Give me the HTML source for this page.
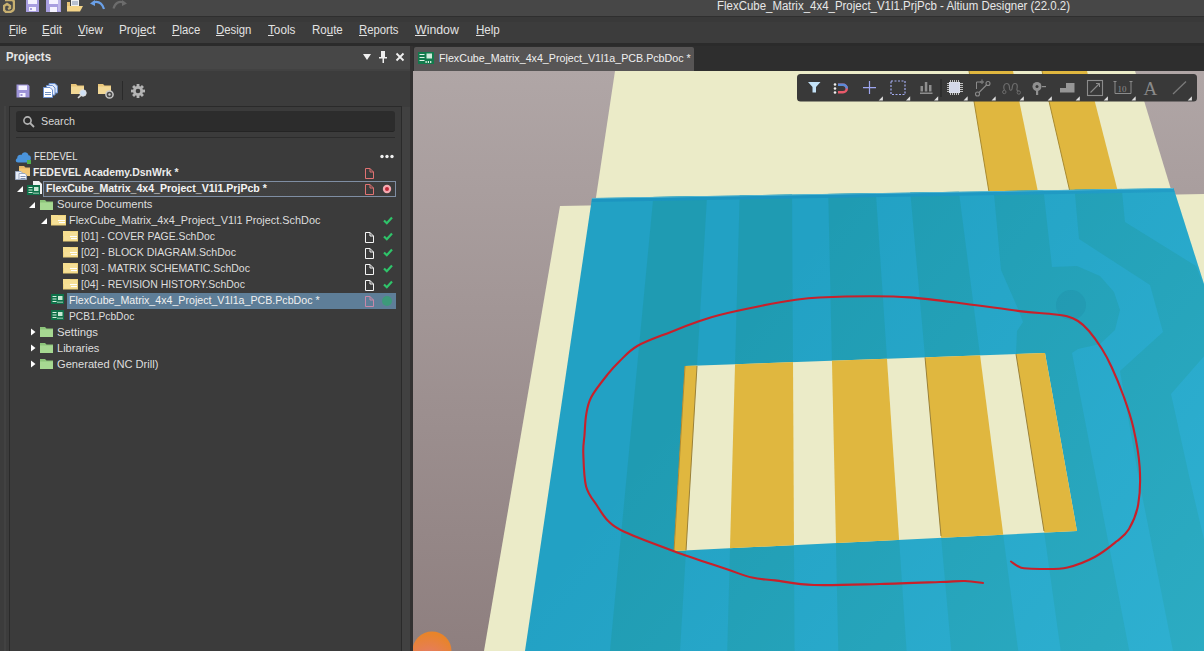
<!DOCTYPE html><html><head><meta charset="utf-8"><style>
html,body{margin:0;padding:0;}
body{width:1204px;height:651px;overflow:hidden;position:relative;background:#2e2e2e;font-family:"Liberation Sans",sans-serif;}
.a{position:absolute;}
.t{position:absolute;white-space:pre;line-height:1;}
u{text-decoration:none;}
</style></head><body>
<div class="a" style="left:0;top:0;width:1204px;height:16px;background:#474747"></div>
<div class="a" style="left:0;top:16px;width:1204px;height:1px;background:#2f2f2f"></div>
<div class="a" style="left:0;top:17px;width:1204px;height:26px;background:#3c3c3c"></div>
<div class="a" style="left:0;top:17px;width:1204px;height:5px;background:#393939"></div>
<div class="a" style="left:0;top:43px;width:1204px;height:3px;background:#2b2b2b"></div>
<svg class="a" style="left:3px;top:0px" width="12" height="13"><path d="M2,0 H9 Q11,0 11,3 V7 Q11,12 6,12 H3 L1,10 V6 L4,4 L7,6 V8 L5,9" fill="none" stroke="#c8b070" stroke-width="2.4"/></svg>
<svg class="a" style="left:26px;top:0px" width="13" height="12"><path d="M0,0 H13 V12 H0 Z" fill="#a89ee0"/><rect x="2" y="0" width="9" height="4" fill="#f4f2ff"/><rect x="3" y="7" width="7" height="4" fill="#f4f2ff"/><rect x="4" y="8" width="2" height="2" fill="#a89ee0"/></svg>
<svg class="a" style="left:46px;top:0px" width="15" height="12"><path d="M0,0 H15 V12 H0 Z" fill="#a89ee0"/><rect x="3" y="0" width="9" height="4" fill="#f4f2ff"/><rect x="4" y="7" width="7" height="5" fill="#f4f2ff"/><rect x="12.5" y="0" width="1" height="11" fill="#d8d4f4"/></svg>
<svg class="a" style="left:67px;top:0px" width="17" height="12"><rect x="4" y="0" width="8" height="6" fill="#f0f0f0"/><rect x="5" y="1.5" width="6" height="1" fill="#8090b0"/><rect x="5" y="3.5" width="6" height="1" fill="#8090b0"/><path d="M0,2 H3 V11 H0 Z" fill="#e8c478"/><path d="M0,6 H16 L13,11.5 H0 Z" fill="#f4d488"/></svg>
<svg class="a" style="left:90px;top:0px" width="16" height="10"><path d="M3,2.5 Q11,0 14,9" fill="none" stroke="#6aa0e8" stroke-width="2.2"/><polygon points="0,3.5 5,0 5,6" fill="#6aa0e8"/></svg>
<svg class="a" style="left:112px;top:0px" width="15" height="9"><path d="M12,2.5 Q4,0 1.5,8.5" fill="none" stroke="#6c6c6c" stroke-width="2.2"/><polygon points="15,3.5 10,0 10,6" fill="#6c6c6c"/></svg>
<div class="t" style="left:716.6px;top:0.2px;font-size:12px;font-weight:400;color:#e8e8e8;transform:scaleX(0.9554);transform-origin:0 0;">FlexCube_Matrix_4x4_Project_V1l1.PrjPcb - Altium Designer (22.0.2)</div>
<div class="t" style="left:8.5px;top:23.9px;font-size:12px;font-weight:400;color:#e2e2e2;transform:scaleX(0.9254);transform-origin:0 0;"><span style="text-decoration:underline;text-underline-offset:1px;text-decoration-thickness:1px">F</span>ile</div>
<div class="t" style="left:42.4px;top:23.9px;font-size:12px;font-weight:400;color:#e2e2e2;transform:scaleX(0.9627);transform-origin:0 0;"><span style="text-decoration:underline;text-underline-offset:1px;text-decoration-thickness:1px">E</span>dit</div>
<div class="t" style="left:77.8px;top:23.9px;font-size:12px;font-weight:400;color:#e2e2e2;transform:scaleX(0.9652);transform-origin:0 0;"><span style="text-decoration:underline;text-underline-offset:1px;text-decoration-thickness:1px">V</span>iew</div>
<div class="t" style="left:119.1px;top:23.9px;font-size:12px;font-weight:400;color:#e2e2e2;transform:scaleX(0.9801);transform-origin:0 0;">Proj<span style="text-decoration:underline;text-underline-offset:1px;text-decoration-thickness:1px">e</span>ct</div>
<div class="t" style="left:171.9px;top:23.9px;font-size:12px;font-weight:400;color:#e2e2e2;transform:scaleX(0.9395);transform-origin:0 0;"><span style="text-decoration:underline;text-underline-offset:1px;text-decoration-thickness:1px">P</span>lace</div>
<div class="t" style="left:216.3px;top:23.9px;font-size:12px;font-weight:400;color:#e2e2e2;transform:scaleX(0.9476);transform-origin:0 0;"><span style="text-decoration:underline;text-underline-offset:1px;text-decoration-thickness:1px">D</span>esign</div>
<div class="t" style="left:267.9px;top:23.9px;font-size:12px;font-weight:400;color:#e2e2e2;transform:scaleX(0.9780);transform-origin:0 0;"><span style="text-decoration:underline;text-underline-offset:1px;text-decoration-thickness:1px">T</span>ools</div>
<div class="t" style="left:312.2px;top:23.9px;font-size:12px;font-weight:400;color:#e2e2e2;transform:scaleX(0.9589);transform-origin:0 0;">Ro<span style="text-decoration:underline;text-underline-offset:1px;text-decoration-thickness:1px">u</span>te</div>
<div class="t" style="left:359.3px;top:23.9px;font-size:12px;font-weight:400;color:#e2e2e2;transform:scaleX(0.9401);transform-origin:0 0;"><span style="text-decoration:underline;text-underline-offset:1px;text-decoration-thickness:1px">R</span>eports</div>
<div class="t" style="left:415.2px;top:23.9px;font-size:12px;font-weight:400;color:#e2e2e2;transform:scaleX(1.0284);transform-origin:0 0;"><span style="text-decoration:underline;text-underline-offset:1px;text-decoration-thickness:1px">W</span>indow</div>
<div class="t" style="left:475.5px;top:23.9px;font-size:12px;font-weight:400;color:#e2e2e2;transform:scaleX(0.9641);transform-origin:0 0;"><span style="text-decoration:underline;text-underline-offset:1px;text-decoration-thickness:1px">H</span>elp</div>
<div class="a" style="left:414px;top:47px;width:280px;height:24px;background:#575555;border-radius:2px 2px 0 0"></div>
<svg class="a" style="left:418px;top:52px" width="16" height="12"><rect x="0" y="0" width="16" height="12" fill="#137a4c"/><rect x="1.5" y="2" width="5" height="1" fill="#e0f4e8"/><rect x="1.5" y="5" width="5" height="1" fill="#e0f4e8"/><rect x="1.5" y="8" width="5" height="1" fill="#e0f4e8"/><rect x="8.5" y="1.5" width="5.5" height="5" fill="#cfeadb"/><rect x="7.5" y="9" width="1.2" height="2" fill="#e0f4e8"/><rect x="9.8" y="9" width="1.2" height="2" fill="#e0f4e8"/><rect x="12.1" y="9" width="1.2" height="2" fill="#e0f4e8"/></svg>
<div class="t" style="left:438.6px;top:52.7px;font-size:11px;font-weight:400;color:#f0f0f0;transform:scaleX(0.9708);transform-origin:0 0;">FlexCube_Matrix_4x4_Project_V1l1a_PCB.PcbDoc *</div>
<div class="a" style="left:0;top:46px;width:410px;height:605px;background:#3c3c3c"></div>
<div class="a" style="left:0;top:46px;width:410px;height:23px;background:#474747"></div>
<div class="a" style="left:0;top:69px;width:410px;height:2px;background:#424242"></div>
<div class="t" style="left:6px;top:51px;font-size:12px;font-weight:700;color:#e6e6e6;transform:scaleX(0.9505);transform-origin:0 0;">Projects</div>
<svg class="a" style="left:362px;top:53px" width="10" height="8"><polygon points="1,1 9,1 5,7" fill="#f0f0f0"/></svg>
<svg class="a" style="left:378px;top:51px" width="10" height="12"><rect x="3" y="0" width="4" height="6" fill="#f0f0f0"/><rect x="1" y="6" width="8" height="1.5" fill="#f0f0f0"/><rect x="4.5" y="7" width="1.5" height="5" fill="#f0f0f0"/></svg>
<svg class="a" style="left:395px;top:52px" width="10" height="10"><path d="M1.5,1.5 L8.5,8.5 M8.5,1.5 L1.5,8.5" stroke="#f0f0f0" stroke-width="1.8"/></svg>
<div class="a" style="left:4px;top:106px;width:2px;height:545px;background:#424242"></div>
<div class="a" style="left:410px;top:46px;width:3px;height:605px;background:#333131"></div>
<div class="a" style="left:402px;top:107px;width:8px;height:544px;background:#414141"></div>
<div class="a" style="left:9px;top:106px;width:391px;height:545px;background:#3b3b3b;border-left:1px solid #2a2a2a;border-top:1px solid #2a2a2a;border-right:1px solid #2a2a2a"></div>
<svg class="a" style="left:16px;top:84px" width="14" height="14"><path d="M0.5,0.5 H12 L13.5,2 V13.5 H0.5 Z" fill="#9d93d8"/><rect x="2.5" y="1.5" width="8.5" height="4.5" fill="#f4f2ff"/><rect x="3.5" y="9" width="6" height="4" fill="#f4f2ff"/><rect x="4.5" y="10" width="2" height="2" fill="#9d93d8"/></svg><svg class="a" style="left:43px;top:83px" width="15" height="15"><path d="M6,0.5 H12 L14.5,3 V10 H6 Z" fill="#d8e4f8" stroke="#6a90d0" stroke-width="1"/><path d="M3.5,2.5 H9.5 L12,5 V12 H3.5 Z" fill="#e8eefc" stroke="#6a90d0" stroke-width="1"/><path d="M0.5,4.5 H7 L9.5,7 V14.5 H0.5 Z" fill="#ffffff" stroke="#6a90d0" stroke-width="1"/><rect x="2" y="9" width="6" height="1" fill="#7090c0"/><rect x="2" y="11" width="6" height="1" fill="#7090c0"/></svg><svg class="a" style="left:71px;top:83px" width="17" height="16"><path d="M0,1 H5 L6.5,2.5 H13 V11 H0 Z" fill="#e9c67a"/><path d="M0,3.5 H13 V11 H0 Z" fill="#f2d896"/><circle cx="12" cy="10" r="3.2" fill="#cfe0f4" stroke="#e0e0e0" stroke-width="1"/><path d="M9.8,12.3 L7,15" stroke="#d8d8d8" stroke-width="1.6"/></svg><svg class="a" style="left:98px;top:83px" width="17" height="16"><path d="M0,1 H5 L6.5,2.5 H13 V11 H0 Z" fill="#e9c67a"/><path d="M0,3.5 H13 V11 H0 Z" fill="#f2d896"/><circle cx="11.5" cy="11.5" r="3.6" fill="#4a4a4a" stroke="#c8c8c8" stroke-width="1.5"/><circle cx="11.5" cy="11.5" r="1.2" fill="#c8c8c8"/></svg><div class="a" style="left:122px;top:81px;width:1px;height:19px;background:#2a2a2a"></div><svg class="a" style="left:131px;top:84px" width="14" height="14" viewBox="0 0 14 14"><g fill="#b4b4b4"><circle cx="7" cy="7" r="5"/><rect x="5.6" y="0" width="2.8" height="14"/><rect x="0" y="5.6" width="14" height="2.8"/><rect x="5.6" y="0" width="2.8" height="14" transform="rotate(45 7 7)"/><rect x="5.6" y="0" width="2.8" height="14" transform="rotate(-45 7 7)"/></g><circle cx="7" cy="7" r="2.3" fill="#3c3c3c"/></svg>
<div class="a" style="left:16px;top:111px;width:379px;height:20px;background:#2c2c2c;border-radius:3px;border-bottom:1px solid #242424"></div>
<svg class="a" style="left:22px;top:115px" width="14" height="14"><circle cx="5.5" cy="5.5" r="3.6" fill="none" stroke="#b4b4b4" stroke-width="1.6"/><path d="M8,8 L12,12" stroke="#b4b4b4" stroke-width="1.8"/></svg>
<div class="t" style="left:41px;top:116px;font-size:11px;font-weight:400;color:#d6d6d6;transform:scaleX(0.9749);transform-origin:0 0;">Search</div>
<div class="a" style="left:16px;top:137px;width:379px;height:1px;background:#2c2c2c"></div>
<div class="a" style="left:43px;top:181px;width:351px;height:14px;border:1px solid #7f8ea3;background:linear-gradient(90deg,#4a4a4a,#3c3c3c)"></div>
<div class="a" style="left:67px;top:293px;width:329px;height:16px;background:#5e7e98"></div>
<div class="t" style="left:33.6px;top:150.7px;font-size:11px;font-weight:400;color:#e4e4e4;transform:scaleX(0.8673);transform-origin:0 0;">FEDEVEL</div>
<div class="t" style="left:33.2px;top:166.7px;font-size:11px;font-weight:700;color:#ececec;transform:scaleX(0.9511);transform-origin:0 0;">FEDEVEL Academy.DsnWrk *</div>
<div class="t" style="left:45.5px;top:182.7px;font-size:11px;font-weight:700;color:#f4f4f4;transform:scaleX(0.9606);transform-origin:0 0;">FlexCube_Matrix_4x4_Project_V1l1.PrjPcb *</div>
<div class="t" style="left:57.2px;top:198.7px;font-size:11px;font-weight:400;color:#dedede;transform:scaleX(1.0204);transform-origin:0 0;">Source Documents</div>
<div class="t" style="left:69.3px;top:214.7px;font-size:11px;font-weight:400;color:#dedede;transform:scaleX(0.9883);transform-origin:0 0;">FlexCube_Matrix_4x4_Project_V1l1 Project.SchDoc</div>
<div class="t" style="left:81.1px;top:230.7px;font-size:11px;font-weight:400;color:#dedede;transform:scaleX(0.9455);transform-origin:0 0;">[01] - COVER PAGE.SchDoc</div>
<div class="t" style="left:81.1px;top:246.7px;font-size:11px;font-weight:400;color:#dedede;transform:scaleX(0.9599);transform-origin:0 0;">[02] - BLOCK DIAGRAM.SchDoc</div>
<div class="t" style="left:81.1px;top:262.7px;font-size:11px;font-weight:400;color:#dedede;transform:scaleX(0.9519);transform-origin:0 0;">[03] - MATRIX SCHEMATIC.SchDoc</div>
<div class="t" style="left:81.1px;top:278.7px;font-size:11px;font-weight:400;color:#dedede;transform:scaleX(0.9508);transform-origin:0 0;">[04] - REVISION HISTORY.SchDoc</div>
<div class="t" style="left:69.3px;top:294.7px;font-size:11px;font-weight:400;color:#f0f0f0;transform:scaleX(0.9666);transform-origin:0 0;">FlexCube_Matrix_4x4_Project_V1l1a_PCB.PcbDoc *</div>
<div class="t" style="left:69.3px;top:310.7px;font-size:11px;font-weight:400;color:#dedede;transform:scaleX(0.9283);transform-origin:0 0;">PCB1.PcbDoc</div>
<div class="t" style="left:57.2px;top:326.7px;font-size:11px;font-weight:400;color:#dedede;transform:scaleX(1.0306);transform-origin:0 0;">Settings</div>
<div class="t" style="left:57.2px;top:342.7px;font-size:11px;font-weight:400;color:#dedede;transform:scaleX(1.0050);transform-origin:0 0;">Libraries</div>
<div class="t" style="left:57.2px;top:358.7px;font-size:11px;font-weight:400;color:#dedede;transform:scaleX(1.0115);transform-origin:0 0;">Generated (NC Drill)</div>
<svg class="a" style="left:15px;top:150px" width="17" height="14"><path d="M3,12.5 C0.5,12.5 0,9.5 2.2,8.3 C2,5.5 4.5,4 6.5,5 C7.5,1.5 12.5,1.2 13.5,5.2 C16,5.2 16.5,9 15,10.5 L15,12.5 Z" fill="#4a94dc"/><rect x="12" y="10" width="4" height="4" fill="#50b050"/></svg>
<svg class="a" style="left:15px;top:165px" width="16" height="15"><path d="M4,1 H9 L10.5,2.5 H15 V11 H4 Z" fill="#e8b868"/><path d="M4,3.5 H15 V11 H4 Z" fill="#f4c878"/><path d="M0.5,6.5 H6 L7.5,8 V14.5 H0.5 Z" fill="#e8eef8" stroke="#9aa8c0" stroke-width="1"/><path d="M4,8.5 H10 L11.5,10 V14.5 H4 Z" fill="#f8f8ff" stroke="#9aa8c0" stroke-width="1"/><rect x="5.5" y="11" width="5" height="1" fill="#8090b0"/><rect x="5.5" y="13" width="5" height="1" fill="#8090b0"/></svg>
<svg class="a" style="left:17px;top:186px" width="7" height="7"><polygon points="6,0 6,6 0,6" fill="#ffffff"/></svg>
<svg class="a" style="left:27px;top:181px" width="16" height="15"><path d="M6,0 H12 L15,3 V13 H6 Z" fill="#f2f2f2"/><rect x="0" y="4" width="13" height="10" fill="#0f7049"/><rect x="1.5" y="6" width="4" height="1" fill="#d8f0e0"/><rect x="1.5" y="8.5" width="4" height="1" fill="#d8f0e0"/><rect x="1.5" y="11" width="4" height="1" fill="#d8f0e0"/><rect x="7" y="6" width="4.5" height="4" fill="#c8e8d4"/><rect x="6.5" y="11.5" width="1" height="1.5" fill="#d8f0e0"/><rect x="8.5" y="11.5" width="1" height="1.5" fill="#d8f0e0"/><rect x="10.5" y="11.5" width="1" height="1.5" fill="#d8f0e0"/></svg>
<svg class="a" style="left:29px;top:202px" width="7" height="7"><polygon points="6,0 6,6 0,6" fill="#ffffff"/></svg>
<svg class="a" style="left:40px;top:199px" width="14" height="12"><path d="M0,1 H5 L6.5,2.5 H13 V11 H0 Z" fill="#8cc47a"/><path d="M0,3.5 H13 V11 H0 Z" fill="#a6d892"/></svg>
<svg class="a" style="left:41px;top:218px" width="7" height="7"><polygon points="6,0 6,6 0,6" fill="#ffffff"/></svg>
<svg class="a" style="left:51px;top:215px" width="15" height="11"><rect x="0" y="0" width="15" height="10.5" fill="#f0d47c"/><rect x="1" y="1" width="13" height="8.5" fill="#f6e098"/><rect x="7" y="5" width="7" height="1" fill="#ffffff"/><rect x="8" y="7" width="6" height="1" fill="#ffffff"/><rect x="0" y="0" width="7" height="5" fill="#f6de90"/></svg>
<svg class="a" style="left:63px;top:231px" width="15" height="11"><rect x="0" y="0" width="15" height="10.5" fill="#f0d47c"/><rect x="1" y="1" width="13" height="8.5" fill="#f6e098"/><rect x="7" y="5" width="7" height="1" fill="#ffffff"/><rect x="8" y="7" width="6" height="1" fill="#ffffff"/><rect x="0" y="0" width="7" height="5" fill="#f6de90"/></svg>
<svg class="a" style="left:63px;top:247px" width="15" height="11"><rect x="0" y="0" width="15" height="10.5" fill="#f0d47c"/><rect x="1" y="1" width="13" height="8.5" fill="#f6e098"/><rect x="7" y="5" width="7" height="1" fill="#ffffff"/><rect x="8" y="7" width="6" height="1" fill="#ffffff"/><rect x="0" y="0" width="7" height="5" fill="#f6de90"/></svg>
<svg class="a" style="left:63px;top:263px" width="15" height="11"><rect x="0" y="0" width="15" height="10.5" fill="#f0d47c"/><rect x="1" y="1" width="13" height="8.5" fill="#f6e098"/><rect x="7" y="5" width="7" height="1" fill="#ffffff"/><rect x="8" y="7" width="6" height="1" fill="#ffffff"/><rect x="0" y="0" width="7" height="5" fill="#f6de90"/></svg>
<svg class="a" style="left:63px;top:279px" width="15" height="11"><rect x="0" y="0" width="15" height="10.5" fill="#f0d47c"/><rect x="1" y="1" width="13" height="8.5" fill="#f6e098"/><rect x="7" y="5" width="7" height="1" fill="#ffffff"/><rect x="8" y="7" width="6" height="1" fill="#ffffff"/><rect x="0" y="0" width="7" height="5" fill="#f6de90"/></svg>
<svg class="a" style="left:51px;top:290px" width="16" height="15"><rect x="0" y="4" width="13" height="10" fill="#0f7049"/><rect x="1.5" y="6" width="4" height="1" fill="#d8f0e0"/><rect x="1.5" y="8.5" width="4" height="1" fill="#d8f0e0"/><rect x="1.5" y="11" width="4" height="1" fill="#d8f0e0"/><rect x="7" y="6" width="4.5" height="4" fill="#c8e8d4"/><rect x="6.5" y="11.5" width="1" height="1.5" fill="#d8f0e0"/><rect x="8.5" y="11.5" width="1" height="1.5" fill="#d8f0e0"/><rect x="10.5" y="11.5" width="1" height="1.5" fill="#d8f0e0"/></svg>
<svg class="a" style="left:51px;top:306px" width="16" height="15"><rect x="0" y="4" width="13" height="10" fill="#0f7049"/><rect x="1.5" y="6" width="4" height="1" fill="#d8f0e0"/><rect x="1.5" y="8.5" width="4" height="1" fill="#d8f0e0"/><rect x="1.5" y="11" width="4" height="1" fill="#d8f0e0"/><rect x="7" y="6" width="4.5" height="4" fill="#c8e8d4"/><rect x="6.5" y="11.5" width="1" height="1.5" fill="#d8f0e0"/><rect x="8.5" y="11.5" width="1" height="1.5" fill="#d8f0e0"/><rect x="10.5" y="11.5" width="1" height="1.5" fill="#d8f0e0"/></svg>
<svg class="a" style="left:31px;top:328px" width="5" height="8"><polygon points="0,0.5 4.5,4 0,7.5" fill="#ffffff"/></svg>
<svg class="a" style="left:40px;top:326px" width="14" height="12"><path d="M0,1 H5 L6.5,2.5 H13 V11 H0 Z" fill="#8cc47a"/><path d="M0,3.5 H13 V11 H0 Z" fill="#a6d892"/></svg>
<svg class="a" style="left:31px;top:344px" width="5" height="8"><polygon points="0,0.5 4.5,4 0,7.5" fill="#ffffff"/></svg>
<svg class="a" style="left:40px;top:342px" width="14" height="12"><path d="M0,1 H5 L6.5,2.5 H13 V11 H0 Z" fill="#8cc47a"/><path d="M0,3.5 H13 V11 H0 Z" fill="#a6d892"/></svg>
<svg class="a" style="left:31px;top:360px" width="5" height="8"><polygon points="0,0.5 4.5,4 0,7.5" fill="#ffffff"/></svg>
<svg class="a" style="left:40px;top:358px" width="14" height="12"><path d="M0,1 H5 L6.5,2.5 H13 V11 H0 Z" fill="#8cc47a"/><path d="M0,3.5 H13 V11 H0 Z" fill="#a6d892"/></svg>
<svg class="a" style="left:380px;top:154px" width="14" height="5"><circle cx="2" cy="2.5" r="1.7" fill="#f0f0f0"/><circle cx="7" cy="2.5" r="1.7" fill="#f0f0f0"/><circle cx="12" cy="2.5" r="1.7" fill="#f0f0f0"/></svg>
<svg class="a" style="left:365px;top:168px" width="9" height="11"><path d="M0.5,0.5 H5 L8.5,4 V10.5 H0.5 Z M5,0.5 V4 H8.5" fill="none" stroke="#e07272" stroke-width="1"/></svg>
<svg class="a" style="left:365px;top:184px" width="9" height="11"><path d="M0.5,0.5 H5 L8.5,4 V10.5 H0.5 Z M5,0.5 V4 H8.5" fill="none" stroke="#e07272" stroke-width="1"/></svg>
<svg class="a" style="left:382px;top:184px" width="10" height="10"><circle cx="5" cy="5" r="4.2" fill="#f4a8b0"/><circle cx="5" cy="5" r="2" fill="#c02838"/></svg>
<svg class="a" style="left:383px;top:216px" width="10" height="9"><path d="M1,4.5 L3.8,7.2 L9,1.5" fill="none" stroke="#2fc46a" stroke-width="2.2"/></svg>
<svg class="a" style="left:365px;top:232px" width="9" height="11"><path d="M0.5,0.5 H5 L8.5,4 V10.5 H0.5 Z M5,0.5 V4 H8.5" fill="none" stroke="#f4f4f4" stroke-width="1"/></svg>
<svg class="a" style="left:383px;top:232px" width="10" height="9"><path d="M1,4.5 L3.8,7.2 L9,1.5" fill="none" stroke="#2fc46a" stroke-width="2.2"/></svg>
<svg class="a" style="left:365px;top:248px" width="9" height="11"><path d="M0.5,0.5 H5 L8.5,4 V10.5 H0.5 Z M5,0.5 V4 H8.5" fill="none" stroke="#f4f4f4" stroke-width="1"/></svg>
<svg class="a" style="left:383px;top:248px" width="10" height="9"><path d="M1,4.5 L3.8,7.2 L9,1.5" fill="none" stroke="#2fc46a" stroke-width="2.2"/></svg>
<svg class="a" style="left:365px;top:264px" width="9" height="11"><path d="M0.5,0.5 H5 L8.5,4 V10.5 H0.5 Z M5,0.5 V4 H8.5" fill="none" stroke="#f4f4f4" stroke-width="1"/></svg>
<svg class="a" style="left:383px;top:264px" width="10" height="9"><path d="M1,4.5 L3.8,7.2 L9,1.5" fill="none" stroke="#2fc46a" stroke-width="2.2"/></svg>
<svg class="a" style="left:365px;top:280px" width="9" height="11"><path d="M0.5,0.5 H5 L8.5,4 V10.5 H0.5 Z M5,0.5 V4 H8.5" fill="none" stroke="#f4f4f4" stroke-width="1"/></svg>
<svg class="a" style="left:383px;top:280px" width="10" height="9"><path d="M1,4.5 L3.8,7.2 L9,1.5" fill="none" stroke="#2fc46a" stroke-width="2.2"/></svg>
<svg class="a" style="left:365px;top:296px" width="9" height="11"><path d="M0.5,0.5 H5 L8.5,4 V10.5 H0.5 Z M5,0.5 V4 H8.5" fill="none" stroke="#c888a8" stroke-width="1"/></svg>
<svg class="a" style="left:381px;top:295px" width="12" height="12"><circle cx="6" cy="6" r="5" fill="#3d9a7a"/></svg>
<svg class="a" style="left:413px;top:71px" width="791" height="580" viewBox="413 71 791 580">
<defs><linearGradient id="bg" x1="0" y1="0" x2="0" y2="1"><stop offset="0" stop-color="#b0a6a6"/><stop offset="1" stop-color="#8e7f7f"/></linearGradient><radialGradient id="blob" cx="0.4" cy="0.85" r="0.8"><stop offset="0" stop-color="#e2809c"/><stop offset="0.5" stop-color="#e67e54"/><stop offset="1" stop-color="#e8842a"/></radialGradient><linearGradient id="glow" gradientUnits="userSpaceOnUse" x1="760" y1="300" x2="1204" y2="651"><stop offset="0" stop-color="#5ae6ff" stop-opacity="0"/><stop offset="1" stop-color="#5ae6ff" stop-opacity="0.22"/></linearGradient><clipPath id="blue"><polygon points="592,198 1173.5,188 1204,284 1204,651 525,651"/></clipPath><clipPath id="win"><polygon points="685,366 1045,353 1077,531 674,551"/></clipPath></defs>
<rect x="413" y="71" width="791" height="580" fill="url(#bg)"/>
<polygon points="560,206 1204,194 1204,651 484,651" fill="#ebebc8"/>
<polygon points="615,71 1135,71 1173,196 595,204" fill="#ebebc8"/>
<polygon points="969,71 1013,71 1038,192 989,192" fill="#e0b73f"/>
<polygon points="1042,71 1087,71 1118,192 1070,192" fill="#e0b73f"/>
<line x1="969" y1="71" x2="989" y2="192" stroke="#a88a30" stroke-width="1"/>
<line x1="1042" y1="71" x2="1070" y2="192" stroke="#a88a30" stroke-width="1"/>
<polygon points="592,198 1173.5,188 1204,284 1204,651 525,651" fill="#22a1c4"/>
<g clip-path="url(#blue)">
<polygon points="657.8,150.0 709.8,150.0 679.5,660.0 609.1,660.0" fill="#1f9bb2"/>
<polygon points="740.9,150.0 791.8,150.0 794.6,660.0 727.0,660.0" fill="#1f9bb2"/>
<polygon points="827.3,150.0 873.0,150.0 907.2,660.0 838.5,660.0" fill="#1f9bb2"/>
<polygon points="906.5,150.0 953.5,150.0 1019.4,660.0 952.1,660.0" fill="#1f9bb2"/>
<polygon points="990,150 1039,150 1052,267 1077,266 1100,276 1114,292 1120,310 1115,330 1100,344 1078,349 1072,353 1131,660 1062,660 1044,531 1016,354 1017,331 1023,322 1019,311 1001,270" fill="#1f9bb2"/>
<polygon points="1071,150 1118,150 1125,222 1196,266 1220,325 1220,338 1171,394 1190,480 1230,651 1173,651 1139,480 1120,371 1163,332 1150,285 1079,239" fill="#1f9bb2"/>
<circle cx="1071" cy="305" r="15" fill="#1d93ab"/>
<polygon points="592,198 1173.5,188 1174.7,192 591.5,202" fill="#1c95c0"/>
<rect x="413" y="150" width="791" height="501" fill="url(#glow)"/>
<line x1="592" y1="198.3" x2="1173.5" y2="188.3" stroke="#9fe0e8" stroke-opacity="0.6" stroke-width="0.8"/>
</g>
<polygon points="685,366 1045,353 1077,531 674,551" fill="#ebebc8"/>
<g clip-path="url(#win)">
<polygon points="642.8,340.0 698.5,340.0 684.9,570.0 617.9,570.0" fill="#e0b73f"/>
<polygon points="735.7,340.0 792.9,340.0 794.1,570.0 729.4,570.0" fill="#e0b73f"/>
<polygon points="831.5,340.0 885.7,340.0 901.1,570.0 836.6,570.0" fill="#e0b73f"/>
<polygon points="923.5,340.0 978.1,340.0 1007.8,570.0 944.0,570.0" fill="#e0b73f"/>
<polygon points="1013.8,340.0 1087.1,340.0 1138.8,570.0 1050.2,570.0" fill="#e0b73f"/>
<line x1="697" y1="366" x2="686" y2="551" stroke="#9a8038" stroke-width="1"/>
<line x1="925" y1="357" x2="941" y2="536" stroke="#9a8038" stroke-width="1"/>
<line x1="1016" y1="354" x2="1044" y2="531" stroke="#9a8038" stroke-width="1"/>
</g>
<line x1="685" y1="366" x2="674" y2="551" stroke="#b08a30" stroke-width="1"/>
<path d="M983.0,583.0 C980.0,582.7 972.2,581.2 965.0,581.0 C957.8,580.8 954.2,581.5 940.0,582.0 C925.8,582.5 901.0,583.5 880.0,584.0 C859.0,584.5 831.5,585.6 814.0,585.0 C796.5,584.4 785.3,581.6 775.0,580.4 C764.7,579.2 760.0,579.5 752.0,577.6 C744.0,575.8 739.9,573.7 727.0,569.3 C714.1,564.9 691.6,557.6 674.6,551.4 C657.6,545.2 635.9,537.1 624.8,532.0 C613.7,526.9 612.8,525.4 608.2,521.0 C603.6,516.6 600.8,511.5 597.1,505.7 C593.4,499.9 588.4,495.1 586.1,486.4 C583.8,477.6 583.6,461.8 583.3,453.2 C583.0,444.6 584.0,441.4 584.5,435.0 C585.0,428.6 585.1,420.9 586.2,414.6 C587.3,408.3 587.7,403.9 591.2,397.2 C594.7,390.5 602.6,380.7 607.4,374.7 C612.2,368.7 614.8,365.8 619.8,361.0 C624.8,356.2 629.0,350.8 637.3,346.0 C645.6,341.2 659.3,336.5 669.7,332.4 C680.1,328.2 691.3,324.0 699.6,321.1 C707.9,318.2 709.5,317.4 719.5,314.9 C729.5,312.4 746.9,308.7 759.4,306.2 C771.9,303.7 784.3,301.4 794.3,300.0 C804.3,298.6 806.6,298.1 819.2,297.5 C831.8,296.9 854.9,296.2 870.0,296.2 C885.1,296.2 894.0,296.1 909.8,297.4 C925.6,298.6 946.4,301.4 964.7,303.7 C983.0,306.0 1005.4,309.4 1019.5,311.1 C1033.6,312.8 1041.5,312.9 1049.4,313.8 C1057.3,314.7 1062.2,315.1 1067.0,316.3 C1071.8,317.5 1074.3,318.6 1078.0,321.0 C1081.7,323.4 1085.0,326.3 1089.0,331.0 C1093.0,335.7 1098.2,343.0 1102.0,349.0 C1105.8,355.0 1108.1,359.4 1111.7,367.2 C1115.3,375.0 1119.9,385.9 1123.5,396.0 C1127.1,406.1 1130.6,415.6 1133.3,427.5 C1136.0,439.4 1138.9,454.8 1139.7,467.6 C1140.5,480.4 1140.0,494.3 1138.2,504.5 C1136.4,514.7 1132.6,522.9 1129.0,529.0 C1125.4,535.1 1122.3,536.7 1116.7,541.3 C1111.1,545.9 1103.4,552.4 1095.2,556.7 C1087.0,561.1 1076.2,565.4 1067.5,567.4 C1058.8,569.4 1050.2,568.9 1043.0,569.0 C1035.8,569.1 1028.2,568.7 1024.0,568.2 C1019.8,567.7 1020.2,567.3 1018.0,566.2 C1015.8,565.1 1012.2,562.3 1011.0,561.5" fill="none" stroke="#c8202a" stroke-width="2.1" stroke-linejoin="round" stroke-linecap="round"/>
<circle cx="432" cy="651" r="19.5" fill="url(#blob)"/>
</svg>
<svg class="a" style="left:797px;top:74px" width="400" height="28" viewBox="797 74 400 28">
<rect x="797" y="74" width="400" height="27.5" rx="3.5" fill="#393939"/>
<path d="M808,82 H820.5 L816,87 V92.5 H812.5 V87 Z" fill="#c4e2f8"/>
<path d="M838,83.5 H843 A5,5 0 0 1 843,93.5 H838 V91 H843 A2.5,2.5 0 0 0 843,86 H838 Z" fill="#e85a6a"/>
<path d="M838,83.5 H843 A5,5 0 0 1 848,88.5 H845.5 A2.5,2.5 0 0 0 843,86 H838 Z" fill="#5a8ad8"/>
<circle cx="835" cy="84.5" r="1.3" fill="#f0f0f0"/><circle cx="835" cy="88.5" r="1.3" fill="#f0f0f0"/><circle cx="835" cy="92.5" r="1.3" fill="#f0f0f0"/>
<path d="M869.5,81 V94 M863,87.6 H876" stroke="#9ea6f0" stroke-width="1.2"/>
<rect x="891" y="81" width="14" height="13.5" fill="none" stroke="#a4acf0" stroke-width="1.2" stroke-dasharray="2,1.5"/>
<g fill="#8e8e8e"><rect x="920" y="92.5" width="12.5" height="1.5"/><rect x="920.5" y="86" width="2.5" height="5.5"/><rect x="924.8" y="82" width="2.5" height="9.5"/><rect x="929" y="85" width="2.5" height="6.5"/></g>
<rect x="940.5" y="79" width="1" height="18" fill="#242424"/>
<rect x="949" y="82" width="11" height="11" fill="#e4e8f4"/>
<path d="M947,83.5 H963 M947,85.5 H963 M947,87.5 H963 M947,89.5 H963 M947,91.5 H963 M950.5,80 V95 M952.5,80 V95 M954.5,80 V95 M956.5,80 V95 M958.5,80 V95" stroke="#e0e0e0" stroke-width="0.8"/>
<rect x="949.5" y="82.5" width="10" height="10" fill="#d4d8e8"/>
<path d="M976.5,89 V82 H981" stroke="#8a8a8a" stroke-width="1" fill="none"/><path d="M979,92.5 L986.5,85" stroke="#8a8a8a" stroke-width="1.1"/><circle cx="977.5" cy="94" r="2" fill="none" stroke="#8a8a8a" stroke-width="1.1"/><circle cx="988" cy="83.5" r="2" fill="none" stroke="#8a8a8a" stroke-width="1.1"/><path d="M982,79.5 V84 M980,82 H984" stroke="#8a8a8a" stroke-width="1"/>
<path d="M1004.5,90 C1003,87 1004,83.5 1006.5,83.5 C1009,83.5 1009.5,86 1009.5,88 C1009.5,90.5 1011,91 1012,89 C1012.5,87 1012,83.5 1015,83.5 C1017.5,83.5 1017.5,86.5 1017,88.5 C1016.5,90 1017.5,91 1018.5,91" fill="none" stroke="#6c6c6c" stroke-width="1.2"/><circle cx="1004.3" cy="92" r="1.7" fill="none" stroke="#6c6c6c" stroke-width="1"/><circle cx="1018.8" cy="92.5" r="1.7" fill="none" stroke="#6c6c6c" stroke-width="1"/>
<circle cx="1037" cy="86.5" r="4.5" fill="#909090"/><circle cx="1037" cy="86.5" r="1.5" fill="#393939"/><rect x="1036" y="90" width="2.2" height="5" fill="#909090"/><rect x="1042" y="86" width="4" height="1.2" fill="#909090"/>
<path d="M1060,92.5 V88 H1066 V83 H1074.5 V92.5 Z" fill="#969696"/>
<rect x="1087.5" y="80.5" width="15" height="15" fill="none" stroke="#8c8c8c" stroke-width="1.1"/><path d="M1090.5,92.5 L1099.5,83.5" stroke="#8c8c8c" stroke-width="1.1"/><path d="M1096,83.5 H1099.5 V87" stroke="#8c8c8c" fill="none" stroke-width="1"/>
<path d="M1115,81 V93.5 H1131 V81" fill="none" stroke="#8c8c8c" stroke-width="1"/><path d="M1113.5,81.5 H1116.5 M1129.5,81.5 H1132.5" stroke="#8c8c8c"/>
<text x="1117.5" y="91.5" font-family="Liberation Serif" font-size="9" fill="#8c8c8c">10</text>
<text x="1143.5" y="95" font-family="Liberation Serif" font-size="19" fill="#8a8a8a">A</text>
<path d="M1173,94 L1186,81.5" stroke="#7a7a7a" stroke-width="1.3"/>
<polygon points="882.9,96.3 882.9,100.5 878.7,100.5" fill="#e0e0e0"/>
<polygon points="910.2,96.3 910.2,100.5 906.0,100.5" fill="#e0e0e0"/>
<polygon points="938.2,96.3 938.2,100.5 934.0,100.5" fill="#e0e0e0"/>
<polygon points="967.7,96.3 967.7,100.5 963.5,100.5" fill="#e0e0e0"/>
<polygon points="995.7,96.3 995.7,100.5 991.5,100.5" fill="#e0e0e0"/>
<polygon points="1023.8,96.3 1023.8,100.5 1019.6,100.5" fill="#e0e0e0"/>
<polygon points="1051.8,96.3 1051.8,100.5 1047.6,100.5" fill="#e0e0e0"/>
<polygon points="1079.8,96.3 1079.8,100.5 1075.6,100.5" fill="#e0e0e0"/>
<polygon points="1107.9,96.3 1107.9,100.5 1103.7,100.5" fill="#e0e0e0"/>
<polygon points="1135.7,96.3 1135.7,100.5 1131.5,100.5" fill="#e0e0e0"/>
<polygon points="1191.9,96.3 1191.9,100.5 1187.7,100.5" fill="#e0e0e0"/>
</svg>
</body></html>
